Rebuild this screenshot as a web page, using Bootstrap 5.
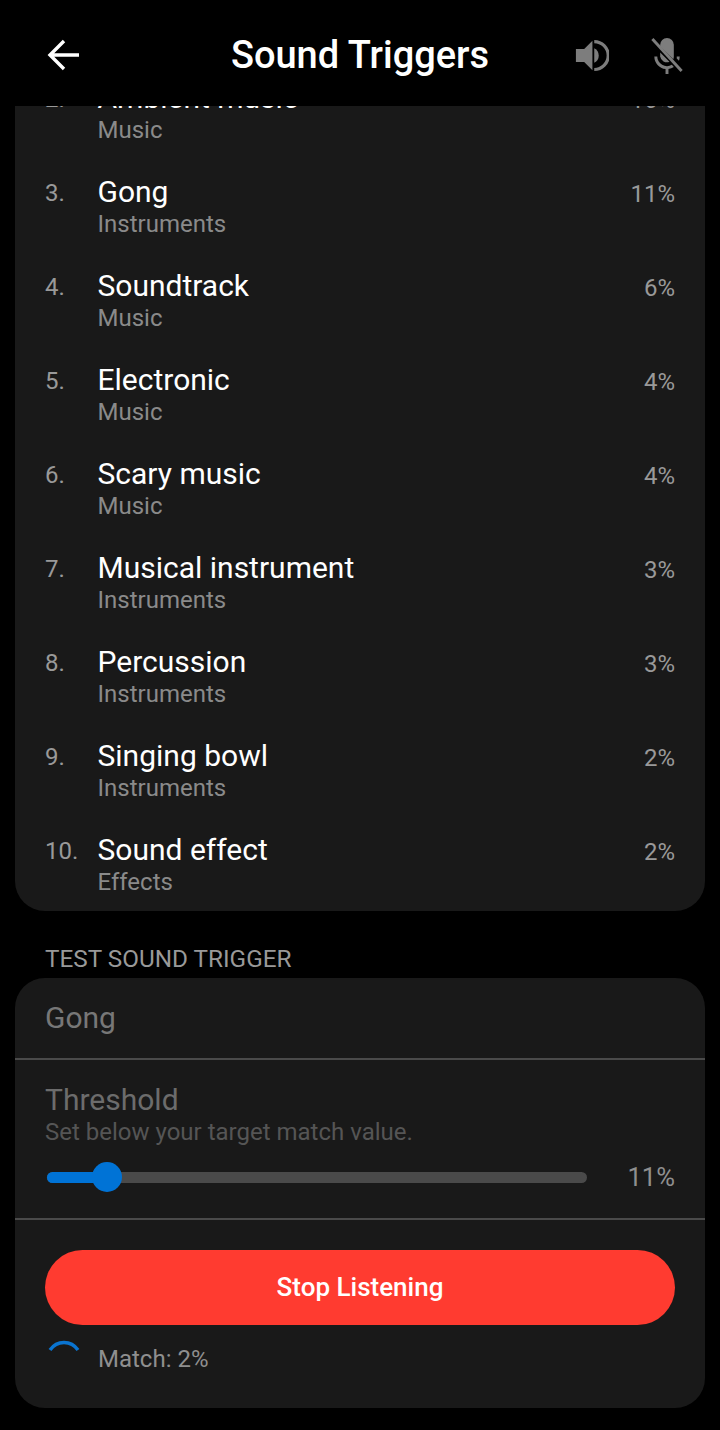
<!DOCTYPE html>
<html lang="en">
<head>
    <meta charset="UTF-8">
    <meta name="viewport" content="width=device-width, initial-scale=1.0">
    <title>Sound Triggers</title>
    <link href="https://cdn.jsdelivr.net/npm/bootstrap@5.3.2/dist/css/bootstrap.min.css" rel="stylesheet">
    <style>
        html, body { background: #000; }
        body { width: 720px; height: 1430px; overflow: hidden; font-family: Roboto, "Liberation Sans", sans-serif; color: #fff; }
        .top-bar { height: 106px; padding-top: 4px; }
        .top-side { flex: 1 1 0; }
        .back-icon { margin-left: 47px; }
        .top-icons { margin-right: 36px; }
        .top-title { font-size: 38px; font-weight: 500; line-height: 1; }
        .sheet { background: #191919; margin: 0 15px; }
        .trigger-sheet { height: 805px; border-radius: 0 0 30px 30px; overflow: hidden; }
        .trigger-rows { margin-top: -40px; }
        .trigger-row { height: 94px; padding: 14px 30px 0 30px; }
        .row-num { width: 53px; font-size: 24px; line-height: 36px; color: #999; padding-top: 1px; }
        .row-name { font-size: 30px; line-height: 36px; margin-left: -.5px; }
        .row-group { font-size: 24px; line-height: 28px; color: #8a8a8a; margin-left: -.5px; }
        .row-pct { font-size: 24px; line-height: 36px; color: #999; padding-top: 2px; }
        .section-label { font-size: 24.300px; line-height: 28px; color: #999; padding: 34px 45px 5px; white-space: nowrap; }
        .test-sheet { height: 430px; border-radius: 30px; }
        .test-name { height: 82px; padding: 20px 30px 0; font-size: 30px; line-height: 40px; color: #777; border-bottom: 2px solid #4a4a4a; }
        .test-threshold { height: 160px; padding: 21px 30px 0; border-bottom: 2px solid #4a4a4a; }
        .thresh-title { font-size: 30px; line-height: 38px; color: #6c6c6c; }
        .thresh-hint { font-size: 24px; line-height: 26px; color: #555; }
        .thresh-row { margin-top: 17px; }
        .thresh-pct { font-size: 25.600px; color: #8f8f8f; line-height: 30px; }
        .slider-track { position: relative; width: 540px; height: 11px; margin-left: 2px; border-radius: 6px; background: #4a4a4a; }
        .slider-fill { height: 100%; border-radius: 6px; background: #0073d6; }
        .slider-knob { position: absolute; top: -10px; left: 45px; width: 30px; height: 30px; border-radius: 50%; background: #0073d6; }
        .stop-btn { display: block; width: 630px; height: 75px; margin: 30px 0 0 30px; border: 0; border-radius: 38px; background: #ff3b30; color: #fff; font-size: 26px; font-weight: 500; }
        .match-line { padding: 14px 30px 0 33px; }
        .match-text { font-size: 24px; line-height: 28px; color: #8f8f8f; margin-left: 18px; padding-top: 6px; }
        .mic-icon { margin-left: 41px; }
    </style>
</head>
<body>
    <div class="top-bar d-flex align-items-center">
        <div class="top-side">
            <svg class="d-block back-icon" width="34" height="34" viewBox="0 0 34 34" fill="none" stroke="#fff" stroke-width="3.4"><path d="M32 17H4M17 3 3 17l14 14"/></svg>
        </div>
        <div class="top-title">Sound Triggers</div>
        <div class="top-side d-flex justify-content-end">
            <div class="top-icons d-flex align-items-center">
                <svg width="35" height="33" viewBox="0 0 36 36" fill="#7d7d7d"><path d="M1 11h9l9-9v32l-9-9H1z"/><path d="M21 10a9 9 0 0 1 0 16z"/><path d="M21 1a17 17 0 0 1 0 34v-3.500a13.500 13.500 0 0 0 0-27z"/></svg>
                <svg class="mic-icon" width="34" height="37" viewBox="0 0 34 38" fill="#7d7d7d"><path d="M10 8a7 7 0 0 1 14 0v12c0 1-.2 2-.6 2.800L10 9.500z"/><path d="M10 16l9.500 9.500A7 7 0 0 1 10 20z"/><path d="M4 20h3a10 10 0 0 0 15 8.600l2 2.300a13 13 0 0 1-5.500 2V38h-3v-5.100A13 13 0 0 1 4 20z"/><path d="M27 20h3c0 1.500-.2 3-.7 4.300L27 22z"/><path d="M2 2l30 33" stroke="#7d7d7d" stroke-width="3" fill="none"/></svg>
            </div>
        </div>
    </div>

    <div class="sheet trigger-sheet">
        <div class="trigger-rows" id="rows"></div>
    </div>

    <div class="section-label">TEST SOUND TRIGGER</div>
    <div class="sheet test-sheet">
        <div class="test-name">Gong</div>
        <div class="test-threshold">
            <div class="thresh-title">Threshold</div>
            <div class="thresh-hint">Set below your target match value.</div>
            <div class="thresh-row d-flex align-items-center justify-content-between">
                <div class="slider-track"><div class="slider-fill" style="width: 11%"></div><div class="slider-knob"></div></div>
                <div class="thresh-pct">11%</div>
            </div>
        </div>
        <button class="stop-btn" type="button">Stop Listening</button>
        <div class="match-line d-flex align-items-start">
            <svg width="32" height="16" viewBox="0 0 32 16" fill="none" stroke="#0a74d0" stroke-width="3.500"><path d="M2 11C9 1 23 1 30 11"/></svg>
            <div class="match-text">Match: 2%</div>
        </div>
    </div>

    <script src="https://cdn.jsdelivr.net/npm/bootstrap@5.3.2/dist/js/bootstrap.bundle.min.js"></script>
    <script>
        const triggers = [
            ['Ambient music', 'Music', '16%'],
            ['Gong', 'Instruments', '11%'],
            ['Soundtrack', 'Music', '6%'],
            ['Electronic', 'Music', '4%'],
            ['Scary music', 'Music', '4%'],
            ['Musical instrument', 'Instruments', '3%'],
            ['Percussion', 'Instruments', '3%'],
            ['Singing bowl', 'Instruments', '2%'],
            ['Sound effect', 'Effects', '2%']
        ];
        document.getElementById('rows').innerHTML = triggers.map((t, i) => `
            <div class="trigger-row d-flex">
                <div class="row-num">${i + 2}.</div>
                <div class="flex-grow-1">
                    <div class="row-name">${t[0]}</div>
                    <div class="row-group">${t[1]}</div>
                </div>
                <div class="row-pct">${t[2]}</div>
            </div>`).join('');
    </script>
</body>
</html>
